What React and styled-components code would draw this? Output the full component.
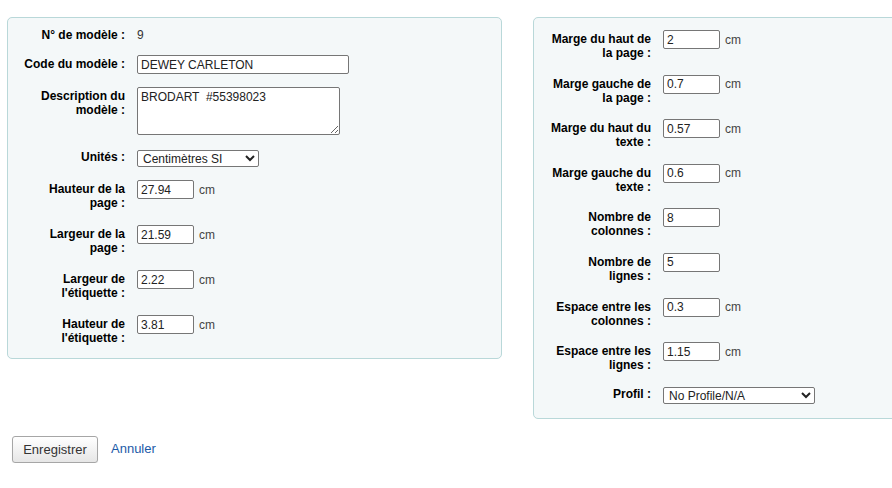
import React from "react";
import styled, { createGlobalStyle } from "styled-components";

const GlobalStyle = createGlobalStyle`
  html, body {
    margin: 0;
    padding: 0;
    background: #ffffff;
    overflow: hidden;
  }
  body {
    font-family: "Liberation Sans", Arial, sans-serif;
    font-size: 12px;
    color: #000;
  }
`;

const Page = styled.div`
  padding: 17px 0 0 7px;
  width: 1100px;
`;

const Columns = styled.div`
  display: flex;
  align-items: flex-start;
  gap: 31px;
`;

const Fieldset = styled.fieldset`
  box-sizing: border-box;
  flex-shrink: 0;
  margin: 0;
  min-width: 0;
  width: ${(p) => p.$width}px;
  padding: ${(p) => p.$padTop}px 9px ${(p) => p.$padBottom}px 9px;
  background: #f4f8f9;
  border: 1px solid #b9d8d9;
  border-radius: 5px;
`;

const Rows = styled.div`
  display: flex;
  flex-direction: column;
  gap: ${(p) => p.$gap}px;
`;

const Row = styled.div`
  display: flex;
  align-items: flex-start;
`;

const Label = styled.label`
  box-sizing: border-box;
  flex: 0 0 108px;
  width: 108px;
  margin-right: 12px;
  padding: ${(p) => (p.$flat ? "0" : "2px 0")};
  text-align: right;
  font-weight: bold;
  font-size: 12px;
  line-height: 14px;
  color: #000;
`;

const Value = styled.span`
  font-size: 12px;
  line-height: 14px;
  color: #333;
`;

const Field = styled.div`
  display: flex;
  align-items: center;
`;

const TextInput = styled.input`
  box-sizing: border-box;
  width: ${(p) => p.$width}px;
  height: 19px;
  margin: 0;
  padding: 0 3px;
  border: 1px solid #767676;
  border-radius: 2px;
  background: #fff;
  font-family: "Liberation Sans", Arial, sans-serif;
  font-size: 12px;
  color: #222;
  outline: none;
`;

const TextArea = styled.textarea`
  box-sizing: border-box;
  width: 203px;
  height: 48px;
  margin: 0 0 2px 0;
  padding: 2px 3px;
  border: 1px solid #767676;
  border-radius: 2px;
  background: #fff;
  font-family: "Liberation Sans", Arial, sans-serif;
  font-size: 12px;
  line-height: 14px;
  color: #222;
`;

const Select = styled.select`
  box-sizing: border-box;
  width: ${(p) => p.$width}px;
  height: 17px;
  margin: 0;
  padding: 0 0 0 1px;
  border: 1px solid #767676;
  border-radius: 2px;
  background: #fff;
  font-family: "Liberation Sans", Arial, sans-serif;
  font-size: 12px;
  color: #222;
`;

const Unit = styled.span`
  margin-left: 5px;
  font-size: 12px;
  color: #444;
`;

const Actions = styled.div`
  display: flex;
  align-items: center;
  margin-top: 17px;
  padding-left: 5px;
`;

const Button = styled.button`
  box-sizing: border-box;
  height: 27px;
  width: 86px;
  padding: 0 6px;
  border: 1px solid #a6a6a6;
  border-radius: 3px;
  background: linear-gradient(#ffffff, #e6e6e6);
  box-shadow: 0 1px 1px rgba(0, 0, 0, 0.08);
  font-family: "Liberation Sans", Arial, sans-serif;
  font-size: 13px;
  color: #333;
`;

const CancelLink = styled.a`
  margin-left: 13px;
  margin-top: -2px;
  font-size: 13px;
  color: #1b5aa8;
  text-decoration: none;
`;

const Lines = ({ lines }) =>
  lines.map((l, i) => (
    <React.Fragment key={i}>
      {i > 0 && <br />}
      {l}
    </React.Fragment>
  ));

const leftSizes = [
  { label: ["Hauteur de la", "page :"], value: "27.94" },
  { label: ["Largeur de la", "page :"], value: "21.59" },
  { label: ["Largeur de", "l'étiquette :"], value: "2.22" },
  { label: ["Hauteur de", "l'étiquette :"], value: "3.81" },
];

const rightFields = [
  { label: ["Marge du haut de", "la page :"], value: "2", unit: true },
  { label: ["Marge gauche de", "la page :"], value: "0.7", unit: true },
  { label: ["Marge du haut du", "texte :"], value: "0.57", unit: true },
  { label: ["Marge gauche du", "texte :"], value: "0.6", unit: true },
  { label: ["Nombre de", "colonnes :"], value: "8", unit: false },
  { label: ["Nombre de", "lignes :"], value: "5", unit: false },
  { label: ["Espace entre les", "colonnes :"], value: "0.3", unit: true },
  { label: ["Espace entre les", "lignes :"], value: "1.15", unit: true },
];

const SizeRow = ({ label, value, unit = true }) => (
  <Row>
    <Label>
      <Lines lines={label} />
    </Label>
    <Field>
      <TextInput $width={57} defaultValue={value} />
      {unit && <Unit>cm</Unit>}
    </Field>
  </Row>
);

export default function App() {
  return (
    <>
      <GlobalStyle />
      <Page>
        <Columns>
          <Fieldset $width={495} $padTop={10} $padBottom={11}>
            <Rows $gap={13}>
              <Row>
                <Label $flat>N° de modèle :</Label>
                <Value>9</Value>
              </Row>
              <Row>
                <Label>Code du modèle :</Label>
                <TextInput $width={212} defaultValue="DEWEY CARLETON" />
              </Row>
              <Row>
                <Label>
                  Description du
                  <br />
                  modèle :
                </Label>
                <TextArea defaultValue="BRODART  #55398023" />
              </Row>
              <Row>
                <Label $flat>Unités :</Label>
                <Select $width={122} defaultValue="cm">
                  <option value="cm">Centimètres SI</option>
                  <option value="in">Pouces US</option>
                  <option value="mm">Millimètres SI</option>
                  <option value="pt">Points PostScript</option>
                </Select>
              </Row>
              {leftSizes.map((f) => (
                <SizeRow key={f.value} label={f.label} value={f.value} />
              ))}
            </Rows>
          </Fieldset>

          <Fieldset $width={430} $padTop={12} $padBottom={14}>
            <Rows $gap={12.6}>
              {rightFields.map((f) => (
                <SizeRow key={f.label.join(" ")} label={f.label} value={f.value} unit={f.unit} />
              ))}
              <Row>
                <Label $flat>Profil :</Label>
                <Select $width={152} defaultValue="none">
                  <option value="none">No Profile/N/A</option>
                </Select>
              </Row>
            </Rows>
          </Fieldset>
        </Columns>

        <Actions>
          <Button type="button">Enregistrer</Button>
          <CancelLink href="#">Annuler</CancelLink>
        </Actions>
      </Page>
    </>
  );
}
